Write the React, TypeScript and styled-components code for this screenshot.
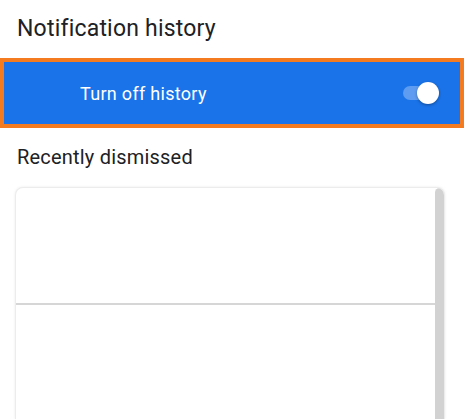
import React from "react";
import styled, { createGlobalStyle } from "styled-components";

const Global = createGlobalStyle`
  html, body { margin: 0; padding: 0; background: #ffffff; }
  body { font-family: Roboto, "Noto Sans", "Liberation Sans", sans-serif; overflow: hidden; }
  * { box-sizing: border-box; }
`;

const Page = styled.div`
  width: 465px;
  height: 419px;
  display: flex;
  flex-direction: column;
  background: #ffffff;
`;

const Title = styled.h1`
  margin: 0;
  height: 58px;
  padding: 13px 0 0 17px;
  font-size: 23px;
  line-height: 32px;
  font-weight: 400;
  color: #202124;
  letter-spacing: 0.2px;
  white-space: nowrap;
`;

const HighlightRow = styled.div`
  width: 464px;
  height: 70px;
  border: 4px solid #f47b20;
  background: #1a73e8;
  display: flex;
  align-items: center;
  justify-content: space-between;
  padding: 0 21px 0 76px;
`;

const RowLabel = styled.span`
  color: #ffffff;
  font-size: 18px;
  letter-spacing: 0.3px;
`;

const Switch = styled.div`
  position: relative;
  width: 36px;
  height: 22px;
  display: flex;
  align-items: center;
`;

const Track = styled.div`
  width: 30px;
  height: 14px;
  border-radius: 7px;
  background: #5d9cf0;
`;

const Thumb = styled.div`
  position: absolute;
  right: 0;
  top: 0;
  width: 22px;
  height: 22px;
  border-radius: 50%;
  background: #ffffff;
  box-shadow: 0 1px 3px rgba(0, 0, 0, 0.35);
`;

const SectionLabel = styled.h2`
  margin: 0;
  height: 59px;
  padding: 16px 0 0 17px;
  font-size: 20px;
  line-height: 26px;
  font-weight: 400;
  color: #202124;
  letter-spacing: 0.2px;
  white-space: nowrap;
`;

const Card = styled.div`
  position: relative;
  margin-left: 15px;
  width: 430px;
  flex: 1;
  border: 1px solid #ececec;
  border-bottom: none;
  border-radius: 8px 8px 0 0;
  box-shadow: 0 0 3px rgba(0, 0, 0, 0.08);
  background: #ffffff;
  display: flex;
  flex-direction: column;
  overflow: hidden;
`;

const Item = styled.div<{ $h: number }>`
  height: ${(p) => p.$h}px;
  flex-shrink: 0;
  border-bottom: 2px solid #d6d6d6;
  &:last-child { border-bottom: none; }
`;

const ScrollBar = styled.div`
  position: absolute;
  right: 0;
  top: 0;
  bottom: 0;
  width: 9px;
  background: #d2d2d2;
  border-radius: 5px 5px 0 0;
`;

export default function App() {
  return (
    <Page>
      <Global />
      <Title>Notification history</Title>
      <HighlightRow>
        <RowLabel>Turn off history</RowLabel>
        <Switch>
          <Track />
          <Thumb />
        </Switch>
      </HighlightRow>
      <SectionLabel>Recently dismissed</SectionLabel>
      <Card>
        <Item $h={117} />
        <Item $h={120} />
        <ScrollBar />
      </Card>
    </Page>
  );
}
